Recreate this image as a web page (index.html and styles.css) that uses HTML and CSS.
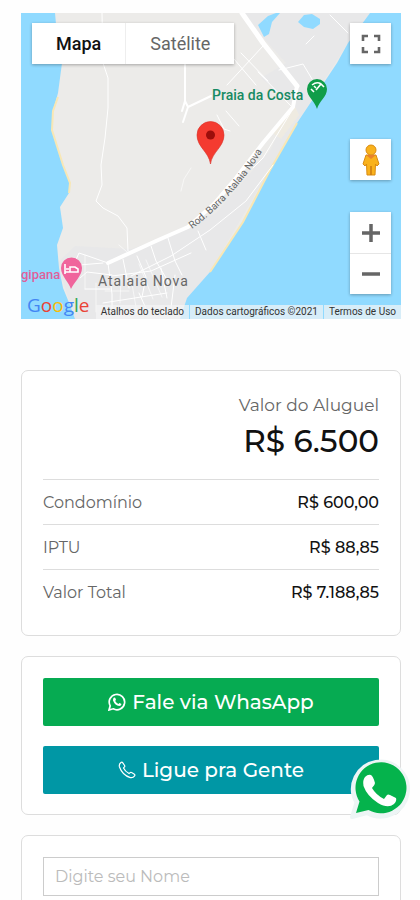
FILE: index.html
```
<!DOCTYPE html>
<html lang="pt-BR">
<head>
    <meta charset="UTF-8">
    <meta name="viewport" content="width=device-width, initial-scale=1">
    <title>Imóvel para alugar</title>
    <link rel="stylesheet" href="styles.css">
</head>
<body>
    <main class="page">
        <section class="map" aria-label="Mapa">
            <svg class="map-canvas" viewBox="0 0 380 306" preserveAspectRatio="xMidYMid slice">
                <rect width="380" height="306" fill="#ecebe9"/>
                <path d="M54 233L110 236 150 222 195 200 250 136 270 90 240 65 265 50 220 0H349L327 30 276 110 189 259 159 306H54L36 250z" fill="#e8e8e9"/>

                <!-- mar e lagoas -->
                <path d="M0 0H34L36 22 41 50 37 80 32 98 31 117 42 152 49 170 48 180 39 194 42 215 36 232 38 255 42 275 49 292 54 306H0z" fill="#90daff"/>
                <path d="M380 0H349L327 30 316 50 276 110 249 157 222 209 189 259 166 285 159 306H380z" fill="#90daff"/>
                <path d="M237 12L247 3 255 0H259L251 9 248 21 243 24z" fill="#90daff"/>
                <path d="M277 9L283 2 291 1 299 6V11L292 16 283 14z" fill="#90daff"/>
                <path d="M37 84L32 98 31 117 42 152 49 170 48 180" fill="none" stroke="#f8e7b5" stroke-width="2"/>
                <path d="M276 110L249 157 222 209 189 259" fill="none" stroke="#f8e7b5" stroke-width="2"/>
                <path d="M272 90L278 102 260 126 252 120z" fill="#efebe1"/>

                <!-- ruas -->
                <g fill="none" stroke="#fff" stroke-linecap="round" stroke-linejoin="round">
                    <path d="M81 0L82 50 87 65 87 95 84 125 80 152 81 172 75 188 82 195 97 203 106 215 107 238" stroke-width="1"/>
                    <path d="M164 50V88L167 94 162 109M167 94L190 83M164 88L161 98" stroke-width="2"/>
                    <path d="M221 0L242 30 276 73" stroke-width="5"/>
                    <path d="M276 73L272 94 242 130 215 165 193 191 167 214 135 228 87 250" stroke-width="4"/>
                    <path d="M242 33L206 72M213 46L235 72M220 40L247 68M237 59L270 93M258 57L282 51 291 66M309 2L327 20M285 31L293 23" stroke-width="1"/>
                    <path d="M196 102L203 116 209 118M205 98L218 113M270 99L242 145 232 155M252 152L225 188 189 217 150 243 110 263" stroke-width="1"/>
                    <path d="M87 250L67 243 58 240 54 249M87 250L91 281V300M91 262L66 259 59 265M47 253L82 250M64 276H89M102 246L108 275M116 243L125 264 121 284M130 233L135 248 148 270M147 225L154 248 161 262M91 263L130 258 170 240M82 290L120 284 146 280M118 280L127 300M140 255L146 285M154 262L150 295M177 218L185 237" stroke-width="1"/>
                    <path d="M118 251L132 286M125 247L141 284M110 265L116 300M64 242V276M75 270V299M100 265L99 290M84 278H108M160 178L163 166 170 155M98 232L106 239" stroke-width=".6"/>
                </g>

                <!-- nomes dos lugares -->
                <path id="rodovia" d="M171 216Q214 184 244 134" fill="none"/>
                <text class="road-name"><textPath href="#rodovia">Rod. Barra Atalaia Nova</textPath></text>
                <text class="district-name" x="77" y="273">Atalaia Nova</text>
                <text class="beach-name" x="191" y="87">Praia da Costa</text>
                <text class="hotel-name" x="0" y="266">gipana</text>

                <!-- marcadores -->
                <path d="M296 96C294 88 286 84 286 76A10 10 0 0 1 306 76C306 84 298 88 296 96z" fill="#109d49"/>
                <path d="M290 76L293 79M291 72Q296 68 300 71M295 77L300 71L303 74M293 73L295 75" fill="none" stroke="#fff" stroke-width="1.6"/>
                <path d="M50 276C48 269 40 263 40 255A10 10 0 0 1 61 255C61 263 53 269 50 276z" fill="#f0659c"/>
                <path d="M44 251V261M44 259H57V256L54 254H49V259M45 256H48" fill="none" stroke="#fff" stroke-width="1.6"/>
                <path d="M189.500 151C188 139 176 134 176 122A13 13 0 0 1 203 122C203 134 191 139 189.500 151z" fill="#f43b30" stroke="#d92f26" stroke-width=".6"/>
                <circle cx="189.500" cy="122" r="4.500" fill="#9c0e0b"/>
            </svg>

            <div class="map-types">
                <button class="map-type active" type="button">Mapa</button>
                <button class="map-type" type="button">Satélite</button>
            </div>

            <div class="map-controls">
                <button class="map-button" type="button" aria-label="Tela cheia">
                    <svg width="20" height="20" viewBox="0 0 20 20"><path d="M2 7V2H7M13 2H18V7M18 13V18H13M7 18H2V13" fill="none" stroke="#666" stroke-width="2.600"/></svg>
                </button>
                <div class="map-tools">
                    <button class="map-button" type="button" aria-label="Street View">
                        <svg width="20" height="32" viewBox="0 0 20 32">
                            <path d="M5 11H15L18 20 16 22 14.500 20 14 31H6L5.500 20 4 22 2 20z" fill="#f9b21c" stroke="#d98b12"/>
                            <path d="M10 22V31" stroke="#c87912" stroke-width="1.500"/>
                            <circle cx="10" cy="6" r="5" fill="#f9b21c" stroke="#d98b12"/>
                            <path d="M5 11H15L10 15z" fill="#e8822a"/>
                        </svg>
                    </button>
                    <div class="zoom-buttons">
                        <button class="zoom-button" type="button" aria-label="Aumentar zoom">
                            <svg width="20" height="20" viewBox="0 0 20 20"><path d="M1 10H19M10 1V19" stroke="#666" stroke-width="3.500"/></svg>
                        </button>
                        <button class="zoom-button" type="button" aria-label="Diminuir zoom">
                            <svg width="20" height="20" viewBox="0 0 20 20"><path d="M1 10H19" stroke="#666" stroke-width="3.500"/></svg>
                        </button>
                    </div>
                </div>
            </div>

            <div class="map-footer">
                <a class="google" href="#" aria-label="Google"><span class="blue">G</span><span class="red">o</span><span class="yellow">o</span><span class="blue">g</span><span class="green">l</span><span class="red">e</span></a>
                <div class="map-links">
                    <button class="map-link" type="button">Atalhos do teclado</button>
                    <span class="map-link">Dados cartográficos ©2021</span>
                    <a class="map-link" href="#">Termos de Uso</a>
                </div>
            </div>
        </section>

        <section class="card prices">
            <p class="rent-label">Valor do Aluguel</p>
            <p class="rent-value">R$ 6.500</p>
            <table class="price-table">
                <tr><th scope="row">Condomínio</th><td>R$ 600,00</td></tr>
                <tr><th scope="row">IPTU</th><td>R$ 88,85</td></tr>
                <tr><th scope="row">Valor Total</th><td>R$ 7.188,85</td></tr>
            </table>
        </section>

        <section class="card contact">
            <a class="btn btn-whatsapp" href="#">
                <svg width="18" height="18" viewBox="0 0 18 18" fill="none" stroke="#fff">
                    <path d="M1 17L2.200 12.800A7.700 7.700 0 1 1 5.200 15.800z" stroke-width="1.700"/>
                    <path d="M6 4.500L7.200 4.700 8 6.800 7.200 8Q8.300 10.200 10.400 10.900L11.500 9.900 13.500 10.900Q13.200 13 11.300 13.100 7 12.700 5 7.500 4.800 5.500 6 4.500z" fill="#fff" stroke="none"/>
                </svg>
                Fale via WhasApp
            </a>
            <a class="btn btn-phone" href="#">
                <svg width="18" height="18" viewBox="0 0 18 18" fill="none" stroke="#fff" stroke-width="1.200" stroke-linejoin="round">
                    <path d="M3 1.500Q4 .8 4.800 1.800L6.600 4.500Q7.100 5.400 6.300 6.100L5.500 6.900Q7 10.200 11 12.600L12 11.700Q12.700 11 13.600 11.600L16.400 13.300Q17.300 14 16.600 14.900 15 17.200 12.300 16.600 4.300 14 1.400 5.700.8 3 3 1.500z"/>
                </svg>
                Ligue pra Gente
            </a>
        </section>

        <form class="card lead-form">
            <input class="field" type="text" name="nome" placeholder="Digite seu Nome" aria-label="Digite seu Nome">
        </form>
    </main>

    <a class="whatsapp-float" href="#" aria-label="WhatsApp">
        <svg width="62" height="62" viewBox="0 0 62 62">
            <path d="M4 59L8.500 44.500A27.500 27.500 0 1 1 19 55z" fill="#edf5f5" stroke="#edf5f5" stroke-width="4" stroke-linejoin="round"/>
            <path d="M8 55L11.500 43.500A25.500 25.500 0 1 1 20.500 52z" fill="#05b34c"/>
            <path d="M17 19Q20 16 23 17 25 18 27 25 27 27 24 30 28 37 36 41L39 37Q40 36 42 37L48 40Q49 43 46 46 40 51 30 45 19 38 15.500 28 14.500 22 17 19z" fill="#fff"/>
        </svg>
    </a>
</body>
</html>
```
FILE: styles.css
```
* {
    box-sizing: border-box;
}
body {
    margin: 0;
    font-family: Montserrat, Inter, "Open Sans", sans-serif;
    color: #666;
    background: #fefefe;
}
p {
    margin: 0;
}
a {
    text-decoration: none;
}
button {
    border: none;
    padding: 0;
    background: white;
    cursor: pointer;
}
svg {
    display: block;
}
.page {
    display: flex;
    flex-direction: column;
    gap: 20px;
    padding: 13px 19px 0 21px;
}

/* mapa */
.map {
    position: relative;
    height: 306px;
    margin-bottom: 31px;
    overflow: hidden;
    font-family: Roboto, sans-serif;
}
.map-canvas {
    width: 100%;
    height: 100%;
}
.road-name {
    font-size: 10px;
    fill: #666;
}
.district-name {
    font-size: 14px;
    letter-spacing: 1px;
    fill: #666;
}
.beach-name {
    font-size: 14px;
    font-weight: 500;
    fill: #168a63;
}
.hotel-name {
    font-size: 13px;
    font-weight: 500;
    fill: #e0609a;
}
.map-types {
    position: absolute;
    top: 10px;
    left: 11px;
    display: flex;
    box-shadow: 0 1px 3px rgba(0,0,0,0.3);
}
.map-type {
    height: 41px;
    padding: 0 24px;
    font-family: inherit;
    font-size: 18px;
    color: #666;
}
.map-type + .map-type {
    border-left: 1px solid #eee;
}
.map-type.active {
    font-weight: 500;
    color: #111;
}
.map-controls {
    position: absolute;
    top: 10px;
    right: 10px;
    bottom: 25px;
    display: flex;
    flex-direction: column;
    justify-content: space-between;
}
.map-tools {
    display: grid;
    gap: 32px;
}
.map-button,
.zoom-button {
    width: 41px;
    height: 41px;
    display: flex;
    align-items: center;
    justify-content: center;
}
.map-button,
.zoom-buttons {
    box-shadow: 0 1px 3px rgba(0,0,0,0.3);
}
.zoom-buttons {
    background: white;
}
.zoom-button + .zoom-button {
    border-top: 1px solid #e6e6e6;
}
.map-footer {
    position: absolute;
    left: 6px;
    right: 0;
    bottom: 0;
    display: flex;
    align-items: flex-end;
    justify-content: space-between;
}
.google {
    font-family: "Open Sans", sans-serif;
    font-size: 19px;
    font-weight: 500;
    line-height: 28px;
}
.blue { color: #4285f4; }
.red { color: #ea4335; }
.yellow { color: #fbbc05; }
.green { color: #34a853; }
.map-links {
    display: flex;
    gap: 1px;
}
.map-link {
    height: 14px;
    padding: 0 5px;
    font-family: inherit;
    font-size: 10px;
    line-height: 14px;
    white-space: nowrap;
    color: #333;
    background: rgba(245,245,245,0.7);
}

/* cartões */
.card {
    padding: 21px 21px 20px;
    border: 1px solid #ddd;
    border-radius: 7px;
    background: white;
}
.rent-label {
    font-size: 17px;
    line-height: 26px;
    text-align: right;
}
.rent-value {
    margin-bottom: 15px;
    font-size: 31px;
    font-weight: 500;
    line-height: 46px;
    text-align: right;
    color: #111;
}
.price-table {
    width: 100%;
    border-collapse: collapse;
    font-size: 16px;
}
.price-table th,
.price-table td {
    height: 45px;
    padding: 0;
    border-top: 1px solid #ddd;
}
.price-table th {
    font-weight: 400;
    text-align: left;
}
.price-table td {
    font-weight: 500;
    text-align: right;
    color: #111;
}
.contact {
    display: grid;
    gap: 20px;
}
.btn {
    display: flex;
    align-items: center;
    justify-content: center;
    gap: 6px;
    height: 48px;
    border-radius: 2px;
    font-size: 20px;
    font-weight: 500;
    color: white;
}
.btn-whatsapp {
    background: #06ab52;
}
.btn-phone {
    background: #0097a5;
}
.field {
    display: block;
    width: 100%;
    height: 39px;
    padding: 0 11px;
    border: 1px solid #ccc;
    font-family: inherit;
    font-size: 16px;
}
.field::placeholder {
    color: #bbb;
}

/* botão flutuante */
.whatsapp-float {
    position: fixed;
    right: 10px;
    bottom: 80px;
}
```
